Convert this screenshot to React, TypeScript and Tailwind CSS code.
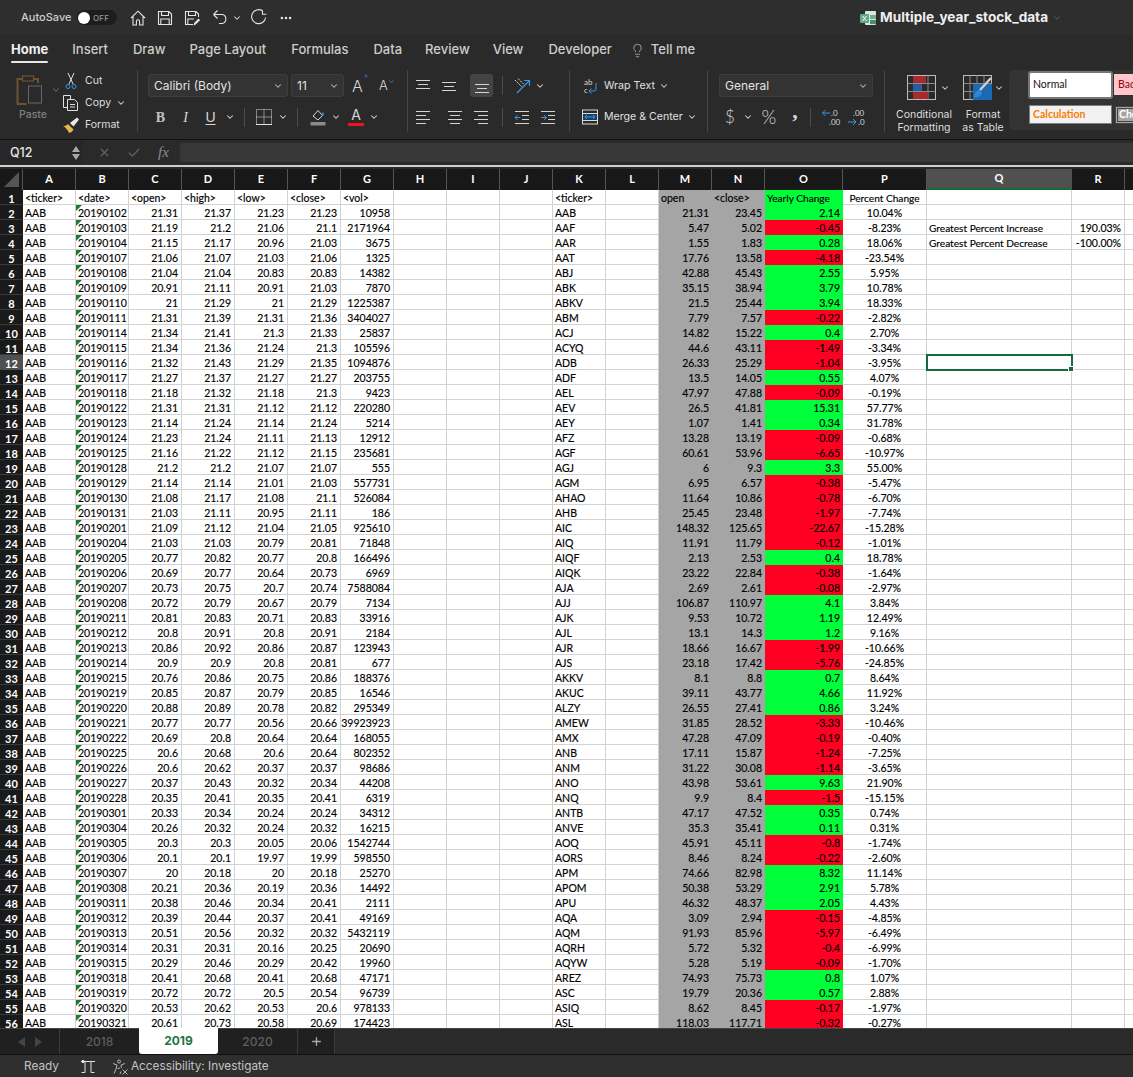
import React from 'react';
import { ChevronDown, Lightbulb, Plus, X, Check, Ellipsis } from 'lucide-react';

const sheetRows = `20190102 21.31 21.37 21.23 21.23 10958
20190103 21.19 21.2 21.06 21.1 2171964
20190104 21.15 21.17 20.96 21.03 3675
20190107 21.06 21.07 21.03 21.06 1325
20190108 21.04 21.04 20.83 20.83 14382
20190109 20.91 21.11 20.91 21.03 7870
20190110 21 21.29 21 21.29 1225387
20190111 21.31 21.39 21.31 21.36 3404027
20190114 21.34 21.41 21.3 21.33 25837
20190115 21.34 21.36 21.24 21.3 105596
20190116 21.32 21.43 21.29 21.35 1094876
20190117 21.27 21.37 21.27 21.27 203755
20190118 21.18 21.32 21.18 21.3 9423
20190122 21.31 21.31 21.12 21.12 220280
20190123 21.14 21.24 21.14 21.24 5214
20190124 21.23 21.24 21.11 21.13 12912
20190125 21.16 21.22 21.12 21.15 235681
20190128 21.2 21.2 21.07 21.07 555
20190129 21.14 21.14 21.01 21.03 557731
20190130 21.08 21.17 21.08 21.1 526084
20190131 21.03 21.11 20.95 21.11 186
20190201 21.09 21.12 21.04 21.05 925610
20190204 21.03 21.03 20.79 20.81 71848
20190205 20.77 20.82 20.77 20.8 166496
20190206 20.69 20.77 20.64 20.73 6969
20190207 20.73 20.75 20.7 20.74 7588084
20190208 20.72 20.79 20.67 20.79 7134
20190211 20.81 20.83 20.71 20.83 33916
20190212 20.8 20.91 20.8 20.91 2184
20190213 20.86 20.92 20.86 20.87 123943
20190214 20.9 20.9 20.8 20.81 677
20190215 20.76 20.86 20.75 20.86 188376
20190219 20.85 20.87 20.79 20.85 16546
20190220 20.88 20.89 20.78 20.82 295349
20190221 20.77 20.77 20.56 20.66 39923923
20190222 20.69 20.8 20.64 20.64 168055
20190225 20.6 20.68 20.6 20.64 802352
20190226 20.6 20.62 20.37 20.37 98686
20190227 20.37 20.43 20.32 20.34 44208
20190228 20.35 20.41 20.35 20.41 6319
20190301 20.33 20.34 20.24 20.24 34312
20190304 20.26 20.32 20.24 20.32 16215
20190305 20.3 20.3 20.05 20.06 1542744
20190306 20.1 20.1 19.97 19.99 598550
20190307 20 20.18 20 20.18 25270
20190308 20.21 20.36 20.19 20.36 14492
20190311 20.38 20.46 20.34 20.41 2111
20190312 20.39 20.44 20.37 20.41 49169
20190313 20.51 20.56 20.32 20.32 5432119
20190314 20.31 20.31 20.16 20.25 20690
20190315 20.29 20.46 20.29 20.42 19960
20190318 20.41 20.68 20.41 20.68 47171
20190319 20.72 20.72 20.5 20.54 96739
20190320 20.53 20.62 20.53 20.6 978133
20190321 20.61 20.73 20.58 20.69 174423`.split('\n').map(r => r.split(' '));

const summaryRows = `AAB 21.31 23.45 2.14 10.04%
AAF 5.47 5.02 -0.45 -8.23%
AAR 1.55 1.83 0.28 18.06%
AAT 17.76 13.58 -4.18 -23.54%
ABJ 42.88 45.43 2.55 5.95%
ABK 35.15 38.94 3.79 10.78%
ABKV 21.5 25.44 3.94 18.33%
ABM 7.79 7.57 -0.22 -2.82%
ACJ 14.82 15.22 0.4 2.70%
ACYQ 44.6 43.11 -1.49 -3.34%
ADB 26.33 25.29 -1.04 -3.95%
ADF 13.5 14.05 0.55 4.07%
AEL 47.97 47.88 -0.09 -0.19%
AEV 26.5 41.81 15.31 57.77%
AEY 1.07 1.41 0.34 31.78%
AFZ 13.28 13.19 -0.09 -0.68%
AGF 60.61 53.96 -6.65 -10.97%
AGJ 6 9.3 3.3 55.00%
AGM 6.95 6.57 -0.38 -5.47%
AHAO 11.64 10.86 -0.78 -6.70%
AHB 25.45 23.48 -1.97 -7.74%
AIC 148.32 125.65 -22.67 -15.28%
AIQ 11.91 11.79 -0.12 -1.01%
AIQF 2.13 2.53 0.4 18.78%
AIQK 23.22 22.84 -0.38 -1.64%
AJA 2.69 2.61 -0.08 -2.97%
AJJ 106.87 110.97 4.1 3.84%
AJK 9.53 10.72 1.19 12.49%
AJL 13.1 14.3 1.2 9.16%
AJR 18.66 16.67 -1.99 -10.66%
AJS 23.18 17.42 -5.76 -24.85%
AKKV 8.1 8.8 0.7 8.64%
AKUC 39.11 43.77 4.66 11.92%
ALZY 26.55 27.41 0.86 3.24%
AMEW 31.85 28.52 -3.33 -10.46%
AMX 47.28 47.09 -0.19 -0.40%
ANB 17.11 15.87 -1.24 -7.25%
ANM 31.22 30.08 -1.14 -3.65%
ANO 43.98 53.61 9.63 21.90%
ANQ 9.9 8.4 -1.5 -15.15%
ANTB 47.17 47.52 0.35 0.74%
ANVE 35.3 35.41 0.11 0.31%
AOQ 45.91 45.11 -0.8 -1.74%
AORS 8.46 8.24 -0.22 -2.60%
APM 74.66 82.98 8.32 11.14%
APOM 50.38 53.29 2.91 5.78%
APU 46.32 48.37 2.05 4.43%
AQA 3.09 2.94 -0.15 -4.85%
AQM 91.93 85.96 -5.97 -6.49%
AQRH 5.72 5.32 -0.4 -6.99%
AQYW 5.28 5.19 -0.09 -1.70%
AREZ 74.93 75.73 0.8 1.07%
ASC 19.79 20.36 0.57 2.88%
ASIQ 8.62 8.45 -0.17 -1.97%
ASL 118.03 117.71 -0.32 -0.27%`.split('\n').map(r => r.split(' '));

const columns = 'ABCDEFGHIJKLMNOPQRS'.split('');

const Chev = ({ className = '' }: { className?: string }) => (
  <ChevronDown size={10} strokeWidth={2.5} className={`text-[#d8d8d8] shrink-0 ${className}`} />
);

// horizontal-line icons for alignment and indent buttons
const Lines = ({ rows, children }: { rows: number[][]; children?: React.ReactNode }) => (
  <svg width="18" height="18" viewBox="0 0 18 18" fill="none" stroke="#d4d4d4" strokeWidth="1">
    {rows.map(([a, b, y]) => <line key={`${a}-${y}`} x1={a} x2={b} y1={y + 0.5} y2={y + 0.5} />)}
    {children}
  </svg>
);

const Cell = ({ className = '', children }: { className?: string; children?: React.ReactNode }) => (
  <div className={`h-[15px] leading-[17px] whitespace-nowrap overflow-hidden relative ${className}`}>{children}</div>
);

const grid = 'border-r border-b border-[#d2d2d2]';
const label = 'text-[10.15px]';

const Sheet = () => (
  <div className="flex-1 overflow-hidden bg-white relative text-[10.5px] text-black [-webkit-text-stroke:0.15px_#000] [font-family:Lato,sans-serif]">
    <div className="grid grid-cols-[23px_repeat(14,53px)_78px_84px_145px_53px_53px] auto-rows-[15px] w-[1178px]">
      <Cell className="bg-[#1a1a1a] text-white text-center font-bold border-b border-[#3a3a3a] text-[11px] [-webkit-text-stroke:0]">1</Cell>
      {['<ticker>', '<date>', '<open>', '<high>', '<low>', '<close>', '<vol>', '', '', '', '<ticker>', ''].map((t, i) => (
        <Cell key={i} className={`${grid} pl-[2px]`}>{t}</Cell>
      ))}
      <Cell className="bg-[#a5a5a5] pl-[2px]">open</Cell>
      <Cell className="bg-[#a5a5a5] pl-[2px]">&lt;close&gt;</Cell>
      <Cell className={`bg-[#00ff3b] pl-[2px] ${label}`}>Yearly Change</Cell>
      <Cell className={`${grid} text-center ${label}`}>Percent Change</Cell>
      <Cell className={grid} />
      <Cell className={grid} />
      <Cell className={grid} />
      {sheetRows.map((r, i) => {
        const rowNo = i + 2;
        const s = summaryRows[i];
        const up = !s[3].startsWith('-');
        const extra: Record<number, string[]> = {
          3: ['Greatest Percent Increase', '190.03%'],
          4: ['Greatest Percent Decrease', '-100.00%'],
        };
        return (
          <React.Fragment key={rowNo}>
            <Cell className={`text-white text-center font-bold border-b text-[11px] [-webkit-text-stroke:0] ${rowNo === 12 ? 'bg-[#505050] border-[#505050]' : 'bg-[#1a1a1a] border-[#3a3a3a]'}`}>{rowNo}</Cell>
            <Cell className={`${grid} pl-[2px]`}>AAB</Cell>
            <Cell className={`${grid} pl-[2px]`}>
              <span className="absolute left-0 top-0 w-[6px] h-[6px] bg-[#1c7a34] [clip-path:polygon(0_0,100%_0,0_100%)]" />
              {r[0]}
            </Cell>
            {r.slice(1).map((v, j) => (
              <Cell key={j} className={`${grid} text-right pr-[3px]`}>{v}</Cell>
            ))}
            <Cell className={grid} />
            <Cell className={grid} />
            <Cell className={grid} />
            <Cell className={`${grid} pl-[2px]`}>{s[0]}</Cell>
            <Cell className={grid} />
            <Cell className="bg-[#a5a5a5] text-right pr-[3px]">{s[1]}</Cell>
            <Cell className="bg-[#a5a5a5] text-right pr-[3px]">{s[2]}</Cell>
            <Cell className={`text-right pr-[3px] ${up ? 'bg-[#00ff3b]' : 'bg-[#ff0022]'}`}>{s[3]}</Cell>
            <Cell className={`${grid} text-center`}>{s[4]}</Cell>
            <Cell className={`${grid} pl-[2px] ${label}`}>{extra[rowNo]?.[0]}</Cell>
            <Cell className={`${grid} text-right pr-[3px]`}>{extra[rowNo]?.[1]}</Cell>
            <Cell className={grid} />
          </React.Fragment>
        );
      })}
    </div>
    {/* selected cell Q12 */}
    <div className="absolute left-[926px] top-[164px] w-[147px] h-[17px] border-2 border-[#14693f] pointer-events-none">
      <span className="absolute -right-[3px] -bottom-[3px] w-[4px] h-[4px] bg-[#14693f] border border-white box-content" />
    </div>
  </div>
);

const ColumnHeaders = () => (
  <div className="flex h-[21px] bg-[#181818] text-[11px] font-bold text-white shrink-0 [font-family:Lato,sans-serif]">
    <div className="w-[23px] shrink-0 border-r border-[#555] relative">
      <span className="absolute right-[3px] bottom-[3px] w-[15px] h-[15px] bg-[#555] [clip-path:polygon(100%_0,100%_100%,0_100%)]" />
    </div>
    {columns.map(c => {
      const w = c === 'O' ? 'w-[78px]' : c === 'P' ? 'w-[84px]' : c === 'Q' ? 'w-[145px]' : 'w-[53px]';
      return (
        <div key={c} className={`${w} shrink-0 flex items-center justify-center border-r ${c === 'Q' ? 'bg-[#505050] border-[#505050] border-b-2 border-b-[#14693f]' : 'border-[#555]'}`}>
          {c === 'S' ? '' : c}
        </div>
      );
    })}
  </div>
);

const TitleBar = () => (
  <div className="h-[35px] bg-[#2e2e2e] flex items-center text-[#e4e4e4] shrink-0 relative">
    <span className="ml-[21px] w-[56px] text-[11px] font-medium text-[#cfcfcf]">AutoSave</span>
    <div className="w-[40px] h-[15px] rounded-full bg-[#1d1d1d] flex items-center">
      <span className="w-[12px] h-[12px] rounded-full bg-white ml-[1px]" />
      <span className="ml-[3px] text-[8px] text-[#9a9a9a] font-medium tracking-wide">OFF</span>
    </div>
    <div className="ml-[13px] flex items-center">
      <svg width="16" height="16" viewBox="0 0 16 16" fill="none" stroke="#e4e4e4" strokeWidth="1.1">
        <path d="M1 8 8 1.2 15 8M3 6.5V15H6.4v-3.6a1.6 1.6 0 0 1 3.2 0V15H13V6.5" />
      </svg>
      <svg className="ml-[11px]" width="16" height="16" viewBox="0 0 16 16" fill="none" stroke="#e4e4e4" strokeWidth="1.1">
        <path d="M1.5 1.5h10.5l2.5 2.5v10.5h-13zM4.5 1.5v4h7v-4M3.8 14.5V9h8.4v5.5" />
      </svg>
      <svg className="ml-[11px]" width="16" height="16" viewBox="0 0 16 16" fill="none" stroke="#e4e4e4" strokeWidth="1.1">
        <path d="M9 14.5H1.5v-13H12l2.5 2.5v3M4.5 1.5v4h7v-4M3.8 14.5V9H10" />
        <path d="M9.5 15.5l.6-2.6 4.4-4.4 1.6 1.6-4.4 4.4z" fill="#e4e4e4" stroke="none" />
      </svg>
      <svg className="ml-[12px]" width="17" height="17" viewBox="0 0 17 17" fill="none" stroke="#e4e4e4" strokeWidth="1.1">
        <path d="M1.5 5.5h9a4.7 4.7 0 0 1 0 9H7M1.5 5.5 5.5 1.5M1.5 5.5l4 4" />
      </svg>
      <Chev className="ml-[3px]" />
      <svg className="ml-[8px]" width="17" height="17" viewBox="0 0 17 17" fill="none" stroke="#e4e4e4" strokeWidth="1.1">
        <path d="M12.5 1.8A7 7 0 1 0 15.6 8.5M12.5 1.2v4h3.8" />
      </svg>
      <Ellipsis size={14} strokeWidth={2.4} className="ml-[12px] text-[#e4e4e4]" />
    </div>
    <div className="absolute left-[860px] top-0 h-full flex items-center">
      <svg width="17" height="16" viewBox="0 0 17 16">
        <rect x="5" y="1" width="11" height="14" rx="1" fill="#d8e8de" />
        <rect x="10" y="5" width="6" height="4" fill="#6fb08f" />
        <rect x="10" y="10" width="6" height="4" fill="#4c8f6c" />
        <rect x="0" y="4" width="9" height="9" rx="1" fill="#5fa983" />
        <path d="M2.5 6 6.5 11M6.5 6 2.5 11" stroke="#fff" strokeWidth="1" />
      </svg>
      <span className="ml-[3px] text-[13.6px] font-bold text-[#efefef] [font-family:Inter,sans-serif]">Multiple_year_stock_data</span>
      <Chev className="ml-[4px] !text-[#555]" />
    </div>
  </div>
);

const TabRow = () => (
  <div className="h-[34px] bg-[#2a2a2a] flex items-center pl-[11px] pb-[4px] gap-[24px] text-[13px] font-medium text-[#cdcdcd] shrink-0">
    <span className="relative font-bold text-[#efefef]">
      Home
      <span className="absolute left-0 right-0 -bottom-[3px] h-[2px] bg-[#e8e8e8] rounded" />
    </span>
    <span>Insert</span>
    <span className="ml-px">Draw</span>
    <span>Page Layout</span>
    <span className="ml-px">Formulas</span>
    <span className="ml-px">Data</span>
    <span className="-ml-px">Review</span>
    <span className="-ml-px">View</span>
    <span className="ml-px">Developer</span>
    <span className="-ml-[6px] flex items-center gap-[6px]">
      <Lightbulb size={15} strokeWidth={1.1} className="text-[#cdcdcd]" />
      Tell me
    </span>
  </div>
);

const Divider = ({ h = 'h-[19px]' }: { h?: string }) => <span className={`w-px ${h} bg-[#4c4c4c] shrink-0 block`} />;

const GroupLine = () => <span className="w-px h-[62px] mt-[1px] bg-[#454545] shrink-0" />;

const Select = ({ label, className }: { label: string; className: string }) => (
  <div className={`h-[23px] rounded-[3px] bg-[#333] border border-[#3e3e3e] flex items-center justify-between pl-[5px] pr-[4px] text-[12px] text-[#e2e2e2] ${className}`}>
    <span className="pt-px">{label}</span>
    <Chev className="!text-[#bbb]" />
  </div>
);

const Clipboard = () => (
  <div className="w-[137px] shrink-0 flex pl-[16px] text-[10.5px] text-[#dedede]">
    <div className="w-[46px] shrink-0 pt-[6px]">
      <div className="flex items-center">
        <svg width="30" height="30" viewBox="0 0 30 30" fill="none">
          <path d="M7 4H1.5v25h9" stroke="#6f5233" strokeWidth="2" />
          <path d="M17 4h5v4" stroke="#6f5233" strokeWidth="2" />
          <rect x="6.5" y="1" width="11" height="5" stroke="#6f5233" strokeWidth="1.2" />
          <rect x="12.5" y="11" width="13" height="17" stroke="#666" strokeWidth="1" />
        </svg>
        <Chev className="ml-[5px] !text-[#666]" />
      </div>
      <div className="text-[#808080] mt-[2px] ml-[3px] font-medium">Paste</div>
    </div>
    <div className="flex flex-col pt-px">
      <div className="h-[22px] flex items-center">
        <svg width="18" height="18" viewBox="0 0 18 18" fill="none" className="mr-[5px]">
          <path d="M6 1l5 11M12 1 7 12" stroke="#e0e0e0" strokeWidth="1" />
          <circle cx="6" cy="14.5" r="2" stroke="#3b95e0" />
          <circle cx="12" cy="14.5" r="2" stroke="#3b95e0" />
        </svg>
        Cut
      </div>
      <div className="h-[22px] flex items-center">
        <svg width="18" height="18" viewBox="0 0 18 18" fill="none" stroke="#e0e0e0" className="mr-[5px]">
          <path d="M6 13.5H1.5v-12h7V5" />
          <path d="M5.5 5.5h7l3 3v8h-10z" />
          <path d="M8 10.5h5M8 13h5" />
        </svg>
        Copy
        <Chev className="ml-[5px]" />
      </div>
      <div className="h-[22px] flex items-center">
        <svg width="18" height="18" viewBox="0 0 18 18" fill="none" className="mr-[5px]">
          <path d="M1 10c2 1 5 4 6 7 2-.5 4-2 4.500-3.500L6 8C5 9.500 3 10 1 10z" fill="#e9b54a" />
          <path d="M8 7l3.500 3.500L17 3.500 15 1.500z" fill="#e8e8e8" />
        </svg>
        Format
      </div>
    </div>
  </div>
);

const FontGroup = () => (
  <div className="w-[269px] shrink-0 pl-[10px] pt-[5px]">
    <div className="flex items-center h-[23px]">
      <Select label="Calibri (Body)" className="w-[140px]" />
      <Select label="11" className="w-[53px] ml-[3px]" />
      <span className="ml-[8px] w-[16px] text-[16px] font-light text-[#d8d8d8] relative">
        A<span className="absolute -top-[3px] left-[12px] text-[9px] text-[#3b95e0]">^</span>
      </span>
      <span className="ml-[11px] text-[13px] font-light text-[#d8d8d8] relative">
        A<ChevronDown size={7} strokeWidth={2.5} className="absolute top-[2px] left-[9px] text-[#3b95e0]" />
      </span>
    </div>
    <div className="flex items-center h-[24px] mt-[8px] text-[#d8d8d8] text-[14px]">
      <span className="w-[25px] text-center font-bold text-[#c4c4c4] [font-family:'Liberation_Serif',serif]">B</span>
      <span className="w-[25px] text-center italic [font-family:'Liberation_Serif',serif]">I</span>
      <span className="w-[25px] text-center underline underline-offset-2 [font-family:'Liberation_Sans',sans-serif]">U</span>
      <span className="w-[14px] flex justify-center"><Chev /></span>
      <span className="ml-[7px]"><Divider /></span>
      <svg className="ml-[10px]" width="18" height="18" viewBox="0 0 18 18" fill="none" stroke="#e0e0e0">
        <rect x="1.500" y="1.500" width="15" height="15" strokeDasharray="1 1" />
        <path d="M9 1.500v15M1.500 9h15" strokeDasharray="1 1" />
        <path d="M1 16.500h16" />
      </svg>
      <Chev className="ml-[5px]" />
      <span className="ml-[9px]"><Divider /></span>
      <svg className="ml-[11px]" width="18" height="18" viewBox="0 0 18 18" fill="none">
        <path d="M4 8 9 2.500l4.500 5-4.500 4.500z" stroke="#d8d8d8" />
        <path d="M14 4.500v3" stroke="#3b95e0" strokeWidth="1.500" />
        <rect x="1.500" y="14" width="15" height="3.500" fill="#8a8a8a" />
      </svg>
      <Chev className="ml-[4px]" />
      <span className="ml-[6px] w-[18px] flex flex-col items-center text-[14px] leading-[14px] relative">
        A
        <span className="w-[16px] h-[3px] bg-[#f0141e] mt-[1px]" />
      </span>
      <Chev className="ml-[4px]" />
    </div>
  </div>
);

const AlignGroup = () => (
  <div className="w-[161px] shrink-0 pl-[6px] pt-[5px]">
    <div className="flex items-center h-[23px]">
      <Lines rows={[[2, 16, 3], [4, 14, 7], [2, 16, 11]]} />
      <span className="ml-[8px]"><Lines rows={[[2, 16, 5], [4, 14, 9], [2, 16, 13]]} /></span>
      <span className="ml-[12px] w-[23px] h-[23px] rounded-[3px] bg-[#444] flex items-center justify-center">
        <Lines rows={[[2, 16, 7], [4, 14, 11], [2, 16, 15]]} />
      </span>
      <span className="ml-[9px]"><Divider /></span>
      <svg className="ml-[10px]" width="18" height="18" viewBox="0 0 18 18" fill="none">
        <path d="M2 3l7 7M5 1.500l6 6" stroke="#d8d8d8" strokeDasharray="2 1" />
        <path d="M4 16 16 4M11 3.500h5.500V9" stroke="#3b95e0" strokeWidth="1.200" />
      </svg>
      <Chev className="ml-[4px]" />
    </div>
    <div className="flex items-center h-[24px] mt-[8px]">
      <Lines rows={[[2, 16, 3], [2, 12, 7], [2, 16, 11], [2, 12, 15]]} />
      <span className="ml-[14px]"><Lines rows={[[2, 16, 3], [4, 14, 7], [2, 16, 11], [4, 14, 15]]} /></span>
      <span className="ml-[8px]"><Lines rows={[[2, 16, 3], [6, 16, 7], [2, 16, 11], [6, 16, 15]]} /></span>
      <span className="ml-[12px]"><Divider /></span>
      <span className="ml-[10px]">
        <Lines rows={[[2, 16, 3], [9, 16, 7], [9, 16, 11], [2, 16, 15]]}>
          <path d="M7.500 9.500H2M4.500 7 2 9.500 4.500 12" stroke="#3b95e0" />
        </Lines>
      </span>
      <span className="ml-[8px]">
        <Lines rows={[[2, 16, 3], [9, 16, 7], [9, 16, 11], [2, 16, 15]]}>
          <path d="M2 9.500h5.500M5 7l2.500 2.500L5 12" stroke="#3b95e0" />
        </Lines>
      </span>
    </div>
  </div>
);

const WrapGroup = () => (
  <div className="w-[137px] shrink-0 pl-[11px] pt-[5px] text-[10.6px] text-[#e0e0e0]">
    <div className="flex items-center h-[23px]">
      <svg width="18" height="18" viewBox="0 0 18 18" fill="none">
        <text x="3" y="8" fontSize="8" fill="#d8d8d8" fontFamily="Lato">ab</text>
        <text x="3" y="16" fontSize="8" fill="#d8d8d8" fontFamily="Lato">c</text>
        <path d="M15 6v6a2 2 0 0 1-2 2H8M10.500 11.500 8 14l2.500 2.500" stroke="#3b95e0" />
      </svg>
      <span className="ml-[5px]">Wrap Text</span>
      <Chev className="ml-[4px]" />
    </div>
    <div className="flex items-center h-[24px] mt-[8px]">
      <svg width="18" height="18" viewBox="0 0 18 18" fill="none">
        <rect x="1.500" y="2" width="15" height="14" stroke="#d8d8d8" />
        <path d="M1.500 5.500h15M1.500 12.500h15" stroke="#d8d8d8" />
        <rect x="2" y="6" width="14" height="6" fill="#163f63" />
        <path d="M4 9h10M6 7l-2 2 2 2M12 7l2 2-2 2" stroke="#3b95e0" />
      </svg>
      <span className="ml-[5px]">Merge &amp; Center</span>
      <Chev className="ml-[4px]" />
    </div>
  </div>
);

const NumberGroup = () => (
  <div className="w-[176px] shrink-0 pl-[11px] pt-[5px]">
    <Select label="General" className="w-[154px]" />
    <div className="flex items-center h-[24px] mt-[8px] text-[#d4d4d4]">
      <span className="w-[22px] text-center text-[17px] font-light [font-family:Lato,sans-serif]">$</span>
      <Chev className="ml-[2px]" />
      <span className="ml-[4px] w-[24px] text-center text-[19px] font-light [font-family:Lato,sans-serif]">%</span>
      <span className="ml-[6px] w-[16px] text-center text-[22px] leading-[20px] font-bold -translate-y-[6px] [font-family:'Liberation_Serif',serif]">,</span>
      <span className="ml-[7px]"><Divider /></span>
      <svg className="ml-[10px]" width="20" height="20" viewBox="0 0 20 20" fill="none">
        <text x="10" y="9" fontSize="8" fill="#d4d4d4" fontFamily="Lato">.0</text>
        <text x="8" y="18" fontSize="8" fill="#d4d4d4" fontFamily="Lato">.00</text>
        <path d="M9 6H1.500M4.500 3 1.500 6l3 3" stroke="#3b95e0" />
      </svg>
      <svg className="ml-[6px]" width="20" height="20" viewBox="0 0 20 20" fill="none">
        <text x="6" y="9" fontSize="8" fill="#d4d4d4" fontFamily="Lato">.00</text>
        <text x="11" y="18" fontSize="8" fill="#d4d4d4" fontFamily="Lato">.0</text>
        <path d="M1 15h8M6 12l3 3-3 3" stroke="#3b95e0" />
      </svg>
    </div>
  </div>
);

const Gallery = () => (
  <div className="flex-1 min-w-0 mt-[1px] h-[60px] bg-[#333] rounded-l-[4px] overflow-hidden pl-[19px] text-[10.5px] [font-family:Lato,sans-serif]">
    <div className="flex items-center h-[29px]">
      <span className="w-[85px] shrink-0 h-[28px] bg-white border-2 border-[#777] rounded-[3px] flex items-center pl-[3px] text-[#111]">Normal</span>
      <span className="w-[40px] shrink-0 h-[21px] ml-[1px] bg-[#ffc7ce] flex items-center pl-[4px] text-[#9c0006]">Bad</span>
    </div>
    <div className="flex items-center h-[21px] mt-[5px]">
      <span className="w-[83px] shrink-0 h-[19px] ml-[1px] bg-[#f2f2f2] border border-[#7f7f7f] flex items-center pl-[3px] font-bold text-[#fa7d00]">Calculation</span>
      <span className="w-[40px] shrink-0 h-[18px] ml-[3px] bg-[#a5a5a5] border-[3px] border-double border-[#444] flex items-center pl-[1px] font-bold text-white">Check</span>
    </div>
  </div>
);

const StyleButtons = () => (
  <div className="flex shrink-0 pl-[6px] text-[10.5px] leading-[13px] text-[#dedede] text-center">
    <div className="w-[66px] flex flex-col items-center pt-[6px]">
      <div className="flex items-center h-[25px] pl-[8px]">
        <svg width="29" height="25" viewBox="0 0 29 25" fill="none">
          <rect x="0.500" y="0.500" width="28" height="24" stroke="#bdbdbd" />
          <path d="M7 .5v24M14 .5v24M21 .5v24M.5 8.500h28M.5 16.500h28" stroke="#888" />
          <rect x="6" y="1" width="13" height="7" fill="#a82a2e" />
          <rect x="6" y="9" width="8" height="7" fill="#1c60a8" />
          <rect x="6" y="17" width="15" height="7" fill="#a82a2e" />
        </svg>
        <Chev className="ml-[4px]" />
      </div>
      <div className="mt-[8px] whitespace-nowrap">Conditional<br />Formatting</div>
    </div>
    <div className="w-[52px] flex flex-col items-center pt-[6px]">
      <div className="flex items-center h-[25px] pl-[1px]">
        <svg width="29" height="25" viewBox="0 0 29 25" fill="none">
          <rect x="0.500" y="0.500" width="28" height="24" stroke="#bdbdbd" />
          <path d="M7 .5v24M14 .5v24M21 .5v24M.5 8.500h28M.5 16.500h28" stroke="#888" />
          <rect x="10" y="9" width="19" height="16" fill="#1c68b4" />
          <path d="M28 3 17 15" stroke="#cfcfcf" strokeWidth="2.500" />
          <path d="M11 22c0-4 3-7 5-7l3 2c0 3-3 6-8 5z" fill="#2f86d6" />
        </svg>
        <Chev className="ml-[2px]" />
      </div>
      <div className="mt-[8px] whitespace-nowrap">Format<br />as Table</div>
    </div>
  </div>
);

const Ribbon = () => (
  <div className="h-[70px] bg-[#2a2a2a] flex shrink-0 [font-family:Inter,sans-serif]">
    <Clipboard />
    <GroupLine />
    <FontGroup />
    <GroupLine />
    <AlignGroup />
    <GroupLine />
    <WrapGroup />
    <GroupLine />
    <NumberGroup />
    <GroupLine />
    <StyleButtons />
    <Gallery />
  </div>
);

const FormulaBar = () => (
  <div className="h-[25px] bg-[#2a2a2a] flex items-center shrink-0 border-t border-[#111] box-content">
    <div className="w-[83px] h-full bg-[#272727] flex items-center justify-between pl-[10px] pr-[2px] text-[12.5px] font-medium text-[#e6e6e6] shrink-0">
      <span className="pt-px">Q12</span>
      <span className="flex flex-col gap-[2px] mr-[1px]">
        <span className="w-0 h-0 border-x-[4px] border-x-transparent border-b-[6px] border-b-[#aaa]" />
        <span className="w-0 h-0 border-x-[4px] border-x-transparent border-t-[6px] border-t-[#aaa]" />
      </span>
    </div>
    <X size={13} strokeWidth={2.5} className="ml-[15px] text-[#5e5e5e]" />
    <Check size={14} strokeWidth={2.5} className="ml-[16px] text-[#5e5e5e]" />
    <span className="ml-[17px] w-[15px] text-[15px] italic text-[#8a8a8a] [font-family:'Liberation_Serif',serif]">fx</span>
    <div className="ml-[7px] flex-1 h-[19px] bg-[#383838] rounded-l-[3px]" />
  </div>
);

const SheetTabs = () => (
  <div className="h-[26px] bg-[#2a2a2a] flex shrink-0 border-t border-[#444] box-border [font-family:Inter,sans-serif] text-[12px]">
    <div className="w-[60px] bg-[#202020] flex items-center justify-center gap-[10px] border-r border-[#3c3c3c]">
      <span className="w-0 h-0 border-y-[5px] border-y-transparent border-r-[7px] border-r-[#444]" />
      <span className="w-0 h-0 border-y-[5px] border-y-transparent border-l-[7px] border-l-[#444]" />
    </div>
    <div className="w-[79px] bg-[#202020] flex items-center justify-center text-[#5f5f5f] font-medium">2018</div>
    <div className="w-[79px] bg-white -mt-px flex items-center justify-center text-[#217346] font-bold rounded-b-[3px]">2019</div>
    <div className="w-[79px] bg-[#202020] flex items-center justify-center text-[#5f5f5f] font-medium">2020</div>
    <div className="w-[38px] bg-[#202020] border-x border-[#3c3c3c] flex items-center justify-center">
      <Plus size={13} strokeWidth={2.5} className="text-[#a8a8a8]" />
    </div>
  </div>
);

const StatusBar = () => (
  <div className="h-[23px] bg-[#2f2f2f] border-t border-[#111] flex items-center pt-px text-[11.8px] text-[#c4c4c4] shrink-0 [font-family:Inter,sans-serif]">
    <span className="ml-[24px]">Ready</span>
    <svg className="ml-[21px]" width="16" height="14" viewBox="0 0 16 14" fill="none" stroke="#e0e0e0">
      <path d="M1 1.500h14M5 1.500v11H1.500M11 1.500v11h3.500" />
      <circle cx="3" cy="1.500" r="1.200" fill="#e0e0e0" />
    </svg>
    <svg className="ml-[16px]" width="17" height="16" viewBox="0 0 17 16" fill="none" stroke="#c4c4c4" strokeWidth="0.9">
      <circle cx="7" cy="2.500" r="1.500" />
      <path d="M1 4.500l4 1.500-1 4-2 4.500M13 4.500 9 6l.5 3M5.500 9.500 8 9M8 15l1-2.500" />
      <path d="M10.500 10.500l5 5M15.500 10.500l-5 5" />
    </svg>
    <span className="ml-[2px]">Accessibility: Investigate</span>
  </div>
);

const App: React.FC = () => {
  return (
    <div className="w-[1133px] h-[1077px] overflow-hidden flex flex-col bg-[#2a2a2a] [font-family:Inter,sans-serif]">
      <TitleBar />
      <TabRow />
      <Ribbon />
      <FormulaBar />
      <div className="h-[2px] bg-[#cfcfcf] shrink-0" />
      <div className="h-[2px] bg-[#2a2a2a] shrink-0" />
      <ColumnHeaders />
      <Sheet />
      <SheetTabs />
      <StatusBar />
    </div>
  );
};

export default App;
